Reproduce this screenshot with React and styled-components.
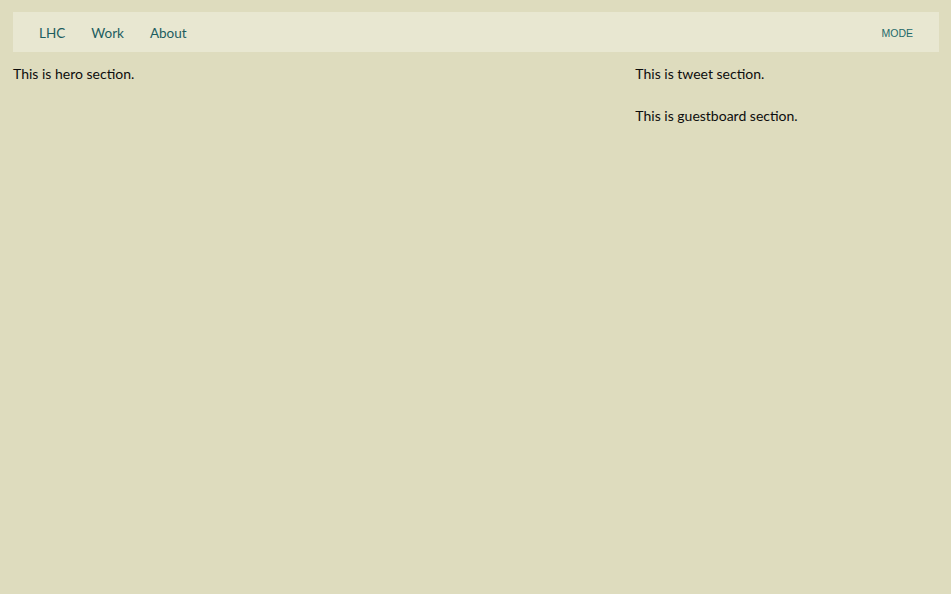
import React from "react";
import styled, { createGlobalStyle } from "styled-components";

const Global = createGlobalStyle`
  html, body { margin: 0; padding: 0; background: #dedcbe; }
  body { font-family: "Lato", "Noto Sans", sans-serif; color: #0d0d0d; }
`;

const Page = styled.div`
  padding: 12px 12px 12px 13px;
  min-height: 100vh;
  box-sizing: border-box;
`;

const Nav = styled.nav`
  display: flex;
  align-items: center;
  justify-content: space-between;
  height: 40px;
  padding: 0 26px;
  background: #e8e7d1;
`;

const Links = styled.div`
  display: flex;
  align-items: center;
  gap: 26px;
  padding-top: 2px;
`;

const NavLink = styled.a`
  font-size: 13.5px;
  color: #1c5d5f;
  text-decoration: none;
  cursor: pointer;
`;

const ModeButton = styled.button`
  border: none;
  background: transparent;
  padding: 2px 0 0;
  font-family: "Liberation Sans", Arial, sans-serif;
  font-size: 10.5px;
  color: #1f6a6a;
  cursor: pointer;
`;

const Grid = styled.main`
  display: grid;
  grid-template-columns: 2fr 1fr;
  column-gap: 15px;
  margin-top: 13px;
`;

const Column = styled.div`
  display: flex;
  flex-direction: column;
  gap: 24px;
`;

const Section = styled.section`
  font-size: 14px;
  line-height: 18px;
`;

export default function App() {
  return (
    <>
      <Global />
      <Page>
        <Nav>
          <Links>
            <NavLink>LHC</NavLink>
            <NavLink>Work</NavLink>
            <NavLink>About</NavLink>
          </Links>
          <ModeButton>MODE</ModeButton>
        </Nav>
        <Grid>
          <Column>
            <Section>This is hero section.</Section>
          </Column>
          <Column>
            <Section>This is tweet section.</Section>
            <Section>This is guestboard section.</Section>
          </Column>
        </Grid>
      </Page>
    </>
  );
}
